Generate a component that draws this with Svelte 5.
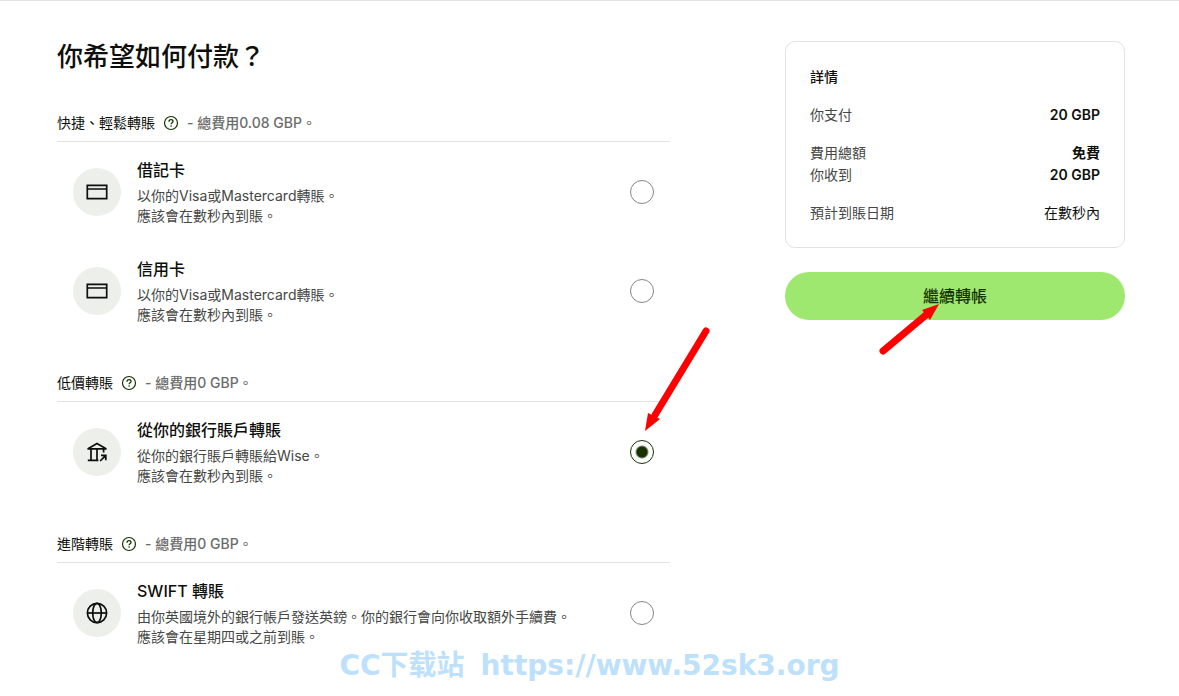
<script>
  const groups = [
    {
      name: '快捷、輕鬆轉賬',
      fee: '總費用0.08 GBP。',
      options: [
        { id: 'debit', icon: 'card', title: '借記卡', lines: ['以你的Visa或Mastercard轉賬。', '應該會在數秒內到賬。'] },
        { id: 'credit', icon: 'card', title: '信用卡', lines: ['以你的Visa或Mastercard轉賬。', '應該會在數秒內到賬。'] }
      ]
    },
    {
      name: '低價轉賬',
      fee: '總費用0 GBP。',
      options: [
        { id: 'bank', icon: 'bank', title: '從你的銀行賬戶轉賬', lines: ['從你的銀行賬戶轉賬給Wise。', '應該會在數秒內到賬。'], arrow: true }
      ]
    },
    {
      name: '進階轉賬',
      fee: '總費用0 GBP。',
      options: [
        { id: 'swift', icon: 'globe', title: 'SWIFT 轉賬', lines: ['由你英國境外的銀行帳戶發送英鎊。你的銀行會向你收取額外手續費。', '應該會在星期四或之前到賬。'] }
      ]
    }
  ];

  let selected = $state('bank');
</script>

<div class="page" lang="zh-Hant">
  <main>
    <h1>你希望如何付款？</h1>

    {#each groups as group}
      <section class="group">
        <h2>
          <span>{group.name}</span>
          <button type="button" class="help" aria-label={group.name}>
            <svg width="16" height="16" viewBox="0 0 16 16" fill="none" stroke="currentColor">
              <circle cx="8" cy="8" r="6.5" stroke-width="1.2" />
              <path d="M6 6.7C6 5.4 6.8 4.7 8 4.7s2 .7 2 1.7c0 1.4-1.9 1.3-1.9 2.9" stroke-width="1.3" />
              <circle cx="8.1" cy="11" r=".8" fill="currentColor" stroke="none" />
            </svg>
          </button>
          <span class="fee">- {group.fee}</span>
        </h2>

        {#each group.options as option}
          <label class="option">
            <span class="icon">
              <svg width="24" height="24" viewBox="0 0 24 24" fill="none" stroke="currentColor" stroke-width="1.7">
                {#if option.icon === 'card'}
                  <path d="M2.3 5.3h19.4v13.4H2.3zM2.3 9h19.4" />
                {:else if option.icon === 'bank'}
                  <path d="M3.4 8.6 12 3.6l8.6 5M2.4 8.9h19.2M6 9v11.4M12 9v11.4M18.6 9v3.6M2.8 20.4h10.6M15.2 21l5.3-5.3M16 15.3h4.8v5" />
                {:else}
                  <circle cx="12" cy="12" r="9.6" />
                  <ellipse cx="12" cy="12" rx="4.3" ry="9.6" />
                  <path d="M2.4 12h19.2" />
                {/if}
              </svg>
            </span>
            <span class="text">
              <span class="title">{option.title}</span>
              {#each option.lines as line}
                <span class="line">{line}</span>
              {/each}
            </span>
            <span class="pick">
              <input type="radio" name="method" value={option.id} bind:group={selected} />
              {#if option.arrow}
                <svg class="arrow" width="74" height="110" viewBox="0 0 74 110" aria-hidden="true">
                  <path d="M66 6 15 90" stroke="#f00" stroke-width="7" stroke-linecap="round" />
                  <path d="M5 106 8 88l12 6z" fill="#f00" />
                </svg>
              {/if}
            </span>
          </label>
        {/each}
      </section>
    {/each}
  </main>

  <aside>
    <div class="card">
      <h3>詳情</h3>
      <dl>
        <div><dt>你支付</dt><dd class="strong">20 GBP</dd></div>
      </dl>
      <dl>
        <div><dt>費用總額</dt><dd class="strong">免費</dd></div>
        <div><dt>你收到</dt><dd class="strong">20 GBP</dd></div>
      </dl>
      <dl>
        <div><dt>預計到賬日期</dt><dd>在數秒內</dd></div>
      </dl>
    </div>
    <div class="action">
      <button type="button" class="continue">繼續轉帳</button>
      <svg class="arrow" width="66" height="56" viewBox="0 0 66 56" aria-hidden="true">
        <path d="M6 50 49 14" stroke="#f00" stroke-width="7" stroke-linecap="round" />
        <path d="M62 3 45 9l8 10z" fill="#f00" />
      </svg>
    </div>
  </aside>

  <p class="watermark"><span lang="zh-Hans">CC下载站</span> <span>https://www.52sk3.org</span></p>
</div>

<style>
  :global(body) { background: #fff; }
  .page {
    position: relative;
    display: grid;
    grid-template-columns: minmax(0, 1fr) 340px;
    gap: 115px;
    padding: 40px 54px 32px 57px;
    border-top: 1px solid #e2e2e2;
    font-family: Inter, "Noto Sans CJK TC", sans-serif;
    font-size: 14px;
    color: #0e0f0c;
  }
  h1, h2, h3, dl, dd, p { margin: 0; }
  h1 { font-size: 26px; line-height: 32px; font-weight: 500; margin-bottom: 40px; }

  .group { margin-bottom: 33px; }
  .group:last-child { margin-bottom: 0; }
  h2 {
    display: flex;
    align-items: center;
    gap: 8px;
    padding-bottom: 8px;
    border-bottom: 1px solid #e2e2e2;
    font-size: 14px;
    line-height: 20px;
    font-weight: 400;
  }
  .help { display: flex; padding: 0; border: none; background: none; color: #163300; cursor: pointer; }
  .fee { color: #6a6c6a; font-weight: 500; }

  .option { display: flex; align-items: center; padding: 16px 16px 15px; cursor: pointer; }
  .icon {
    display: flex;
    align-items: center;
    justify-content: center;
    width: 48px;
    height: 48px;
    border-radius: 50%;
    background: #edefeb;
    flex: none;
  }
  .text { flex: 1; margin: 0 16px; }
  .title { display: block; font-size: 16px; line-height: 24px; font-weight: 500; margin-bottom: 4px; }
  .line { display: block; line-height: 20px; color: #454745; }
  .pick { position: relative; display: flex; }
  input {
    appearance: none;
    width: 24px;
    height: 24px;
    margin: 0;
    border: 1px solid #868685;
    border-radius: 50%;
    background: #fff;
    cursor: pointer;
  }
  input:checked { border-color: #163300; background: radial-gradient(circle, #163300 5px, #fff 7px); }
  .arrow { position: absolute; pointer-events: none; }
  .pick .arrow { left: 10px; bottom: 29px; }

  .card { padding: 24px 24px 23px; border: 1px solid #e2e2e2; border-radius: 10px; line-height: 22px; }
  h3 { font-size: 14px; font-weight: 500; }
  dl { margin-top: 16px; }
  dl div { display: flex; justify-content: space-between; }
  dt { color: #454745; }
  .strong { font-weight: 600; }
  .action { position: relative; margin-top: 24px; }
  .action .arrow { left: 92px; top: 29px; }
  .continue {
    width: 100%;
    height: 48px;
    border: none;
    border-radius: 24px;
    background: #9fe870;
    color: #163300;
    font: 500 16px/24px Inter, "Noto Sans CJK TC", sans-serif;
    cursor: pointer;
  }

  .watermark {
    position: absolute;
    left: 0;
    right: 0;
    bottom: 12px;
    display: flex;
    justify-content: center;
    gap: 16px;
    font: 700 28px/32px "DejaVu Sans", "Noto Sans CJK SC", sans-serif;
    color: #bde0fb;
    pointer-events: none;
  }
</style>
